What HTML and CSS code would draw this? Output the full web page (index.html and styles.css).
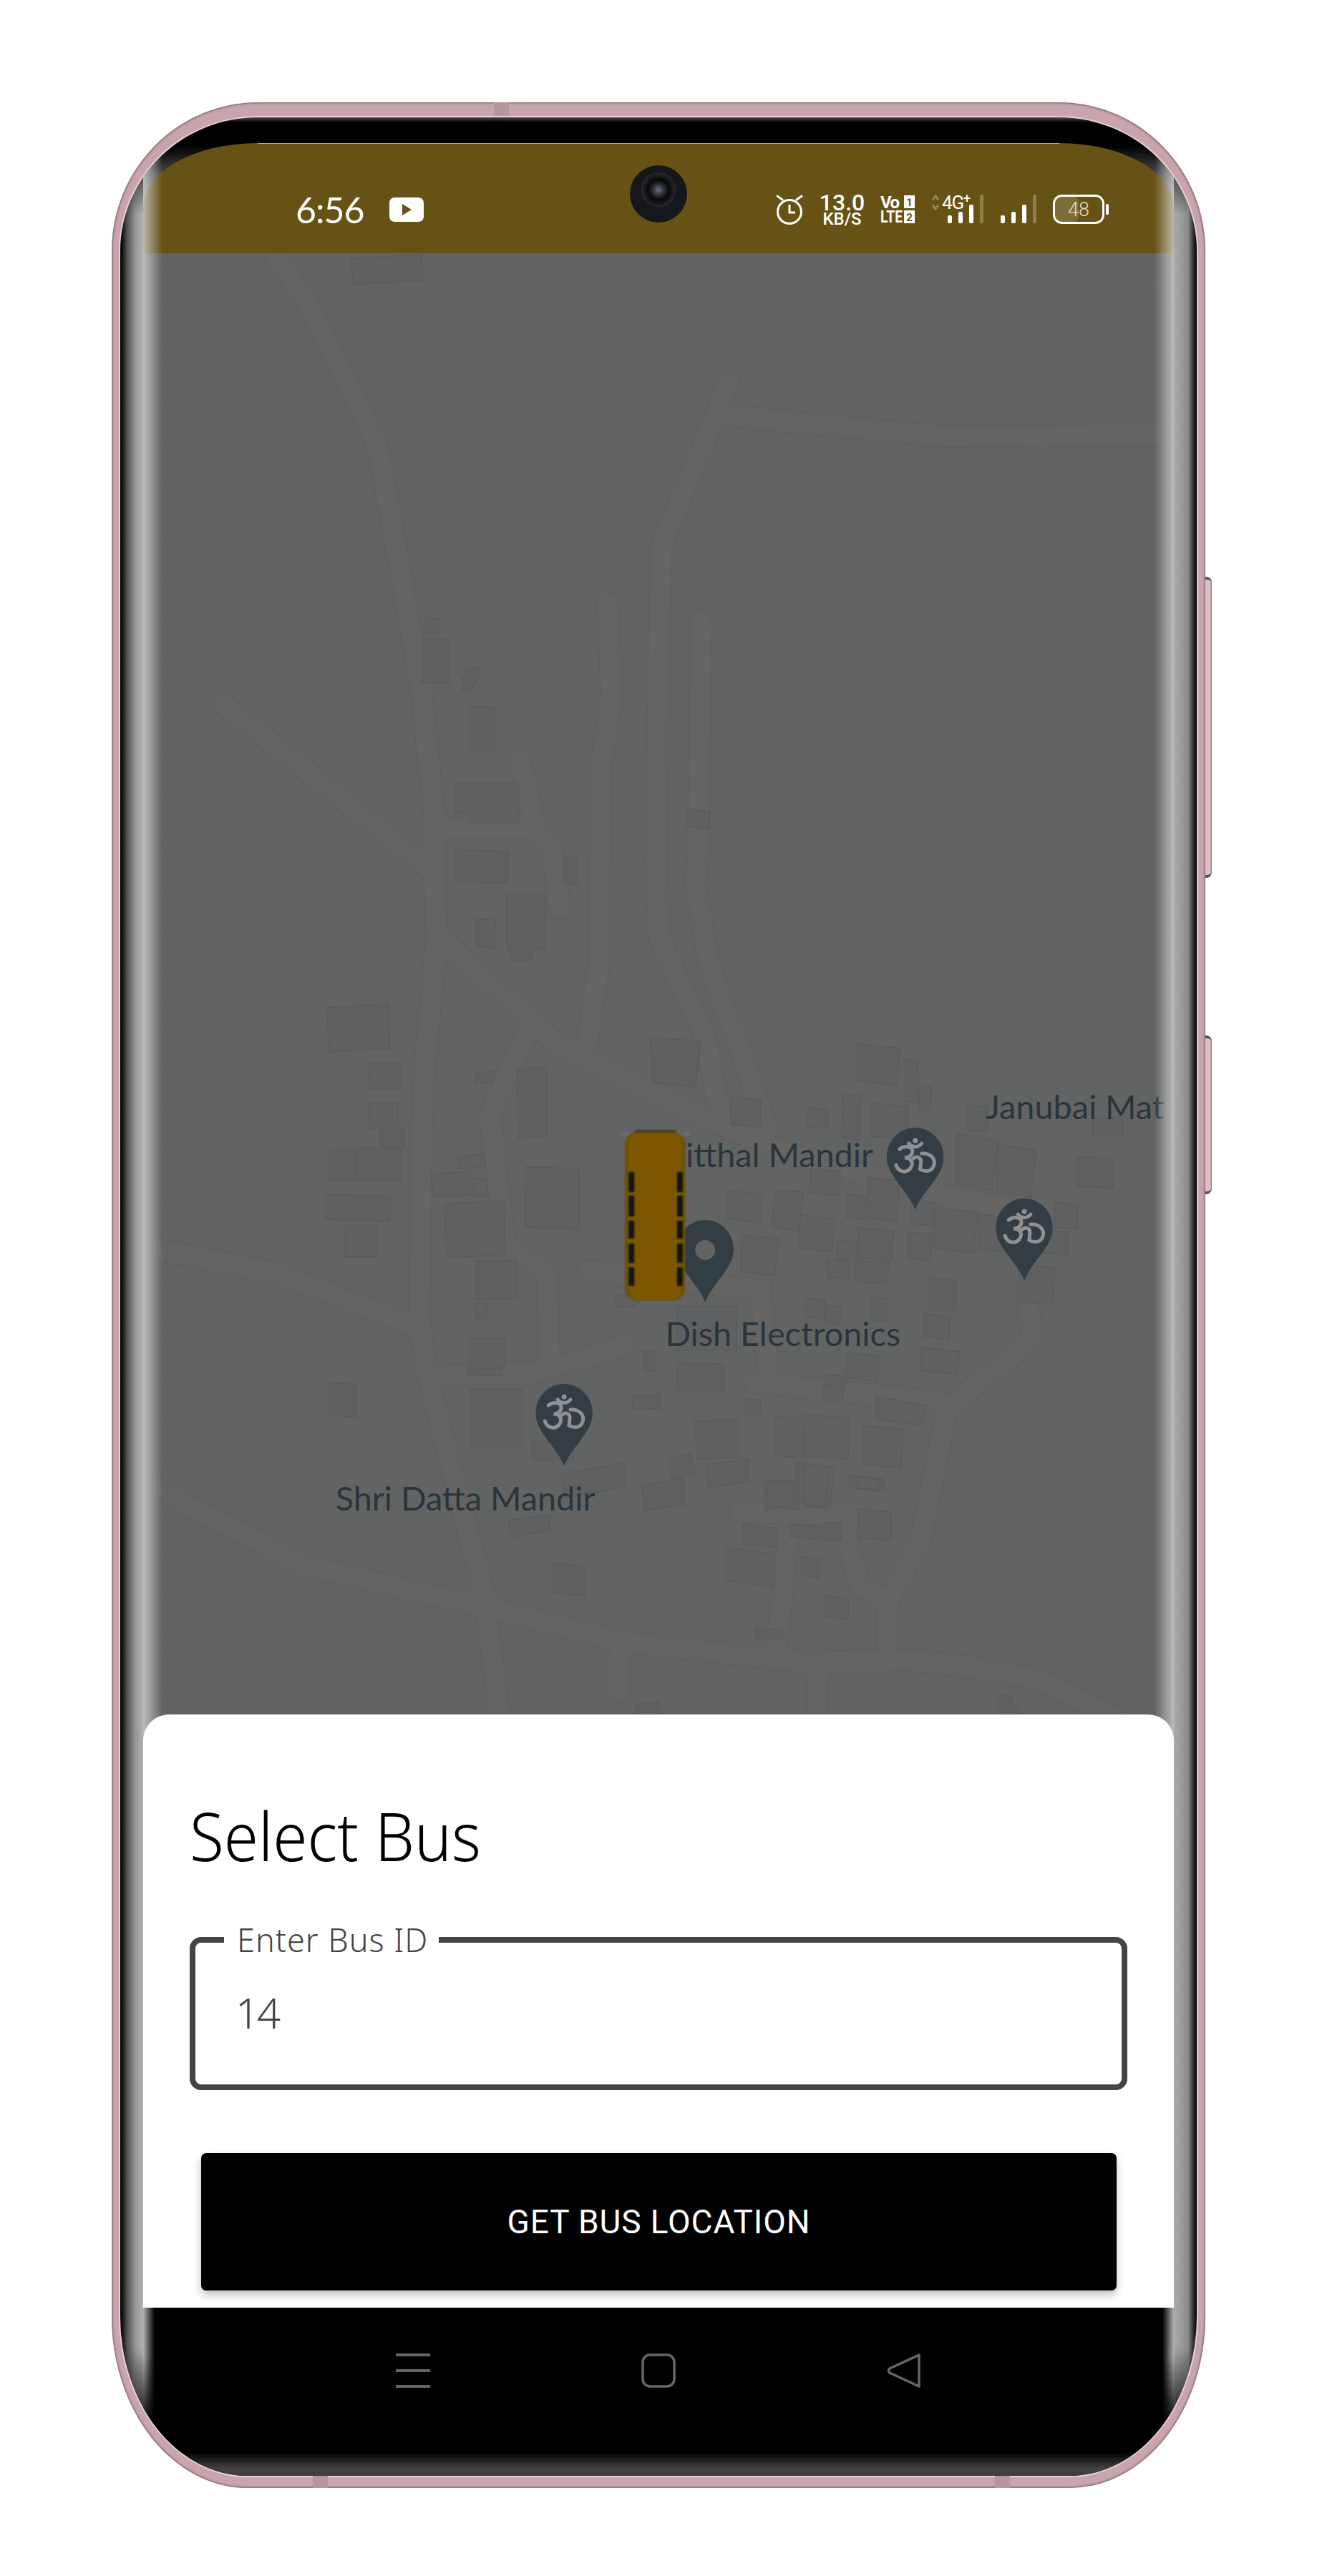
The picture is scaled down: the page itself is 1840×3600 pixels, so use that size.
FILE: index.html
```html
<!DOCTYPE html>
<html lang="en">
<head>
    <meta charset="UTF-8">
    <title>Select Bus</title>
    <link rel="stylesheet" href="styles.css">
</head>
<body>
    <div class="phone">
        <span class="tick tick-top"></span>
        <span class="tick tick-bottom-left"></span>
        <span class="tick tick-bottom-right"></span>
        <span class="side-btn side-btn-power"></span>
        <span class="side-btn side-btn-volume"></span>

        <div class="bezel">
            <div class="screen">
                <div class="upper">
                    <!-- status bar -->
                    <div class="status">
                        <span class="camera"></span>
                        <span class="time">6:56</span>
                        <svg class="yt" width="48" height="34" viewBox="0 0 48 34">
                            <path fill="#fff" fill-rule="evenodd" d="M8 0h32c5 0 8 3 8 8v18c0 5-3 8-8 8H8c-5 0-8-3-8-8V8c0-5 3-8 8-8zM18 9v16l13-8z"/>
                        </svg>
                        <div class="status-right">
                            <svg width="40" height="42" viewBox="0 0 40 42" fill="none" stroke="#fff" stroke-width="3">
                                <circle cx="20" cy="24" r="16.500"/>
                                <path d="M20 14v11h8"/>
                                <path d="M3 2l7 5M37 2l-7 5" stroke-linecap="round"/>
                            </svg>
                            <div class="speed">
                                <span class="speed-value">13.0</span>
                                <span class="speed-unit">KB/S</span>
                            </div>
                            <svg class="tall-icon" width="48" height="62" viewBox="0 -10 48 62">
                                <text class="volte-text" x="0" y="19" textLength="27" lengthAdjust="spacing">Vo</text>
                                <text class="volte-text" x="0" y="39" textLength="31" lengthAdjust="spacingAndGlyphs">LTE</text>
                                <rect x="33" y="1" width="15" height="18" fill="#fff"/>
                                <rect x="33" y="22" width="15" height="18" fill="#fff"/>
                                <text class="sim-num" x="40.500" y="16">1</text>
                                <text class="sim-num" x="40.500" y="37">2</text>
                            </svg>
                            <svg class="tall-icon" width="74" height="62" viewBox="0 -10 74 62">
                                <path d="M2 7l4-5 4 5M2 15l4 5 4-5" fill="none" stroke="#948657" stroke-width="3"/>
                                <text class="net-type" x="15" y="20">4G</text>
                                <text class="net-plus" x="45" y="11">+</text>
                                <g fill="#fff">
                                    <rect x="23" y="29" width="6" height="11" rx="2"/>
                                    <rect x="38" y="24" width="6" height="16" rx="2"/>
                                    <rect x="53" y="14" width="6" height="26" rx="2"/>
                                </g>
                                <rect x="68" y="0" width="5" height="40" rx="2" fill="#8d7e4a"/>
                            </svg>
                            <svg width="50" height="42" viewBox="0 0 50 42">
                                <g fill="#fff">
                                    <rect x="0" y="29" width="6" height="11" rx="2"/>
                                    <rect x="15" y="24" width="6" height="16" rx="2"/>
                                    <rect x="30" y="14" width="6" height="26" rx="2"/>
                                </g>
                                <rect x="45" y="0" width="5" height="40" rx="2" fill="#8d7e4a"/>
                            </svg>
                            <svg width="78" height="42" viewBox="0 0 78 42">
                                <rect x="3" y="3" width="33" height="35" rx="7" fill="#7c6c38"/>
                                <rect x="1.500" y="1.500" width="69" height="38" rx="11" fill="none" stroke="#fff" stroke-width="3"/>
                                <rect x="74" y="13" width="4" height="15" rx="1.500" fill="#fff"/>
                                <text class="battery-level" x="36" y="30">48</text>
                            </svg>
                        </div>
                    </div>

                    <!-- map -->
                    <div class="map">
                        <svg class="map-svg" width="1440" height="2078" viewBox="200 354 1447 2078" preserveAspectRatio="none">
                            <defs>
                                <path id="roads" d="M385 354L429 420 530 625 590 960 610 1150 610 1235 612 1312 595 1495 590 1600 588 1850 600 1925 680 2233 705 2440
                                    M315 986L610 1221
                                    M616 1309L781 1459 988 1562 1100 1610 1317 1670 1425 1690 1433 1690 1447 1874 1329 1968 1292 2150 1245 2240 1245 2307
                                    M1023 533L927 765 920 1200 925 1312 990 1452 1010 1560
                                    M1030 582L1325 610 1660 607
                                    M852 842L858 972 843 1067 840 1347 822 1467
                                    M983 867L980 1190 975 1235 993 1340 1040 1474 1075 1575
                                    M730 1063L750 1158 775 1189 785 1270
                                    M610 1158L750 1158
                                    M745 1430L687 1557 708 1740 767 1780 770 1900
                                    M600 1922L750 1919 875 1880
                                    M218 1746L390 1780 570 1849
                                    M180 2060L423 2187 665 2243 878 2295 1129 2323 1275 2320 1362 2330 1458 2347 1604 2420
                                    M1178 2117L1207 2217 1245 2240
                                    M1105 2150L1090 2300
                                    M1037 2113L1207 2117
                                    M1058 1932L1317 1959
                                    M868 2310L868 2365
                                    M1147 2330L1147 2440
                                    M825 1776L1067 1803 1079 1928"/>
                                <symbol id="om-pin" viewBox="0 0 80 115">
                                    <path class="pin" d="M40 0C62 0 80 18 80 41 80 68 50 88 40 115 30 88 0 68 0 41 0 18 18 0 40 0z"/>
                                    <g class="om">
                                        <path d="M18 30C25 24 37 26 36 34 35 40 29 42 25 42 35 42 38 50 33 57 27 64 16 62 13 52"/>
                                        <path d="M36 44C42 38 48 42 48 47L47 58"/>
                                        <path d="M49 36C62 35 69 44 66 53 63 62 53 62 47 58"/>
                                        <path d="M31 22C35 28 44 28 49 22"/>
                                        <circle class="om-dot" cx="40" cy="18" r="3.500"/>
                                    </g>
                                </symbol>
                            </defs>
                            <rect class="map-ground" x="200" y="354" width="1447" height="2078"/>
                            <use href="#roads" class="road-edge"/>
                            <use href="#roads" class="road-fill"/>
                            <path class="buildings" d="M492 361l99-5 1 36-97 6z
                                M595 863l21 2-1 21-21-2z M592 893h38v61h-38z M655 933l17 0v13l-12 19h-12v-13z M658 988h35v61h-35z
                                M638 1095h89v56h-69v-15h-20z M638 1187l75 3-2 44-73-2z M790 1198h20v38h-18z M710 1250h55v76h-55z M668 1284l27 2-2 39-25-2z M714 1326h33v16h-31z
                                M963 1130l32 4-1 24-31-3z M458 1408l87-5 1 62-85 5z
                                M517 1486h45v35h-45z M517 1541h41v36h-41z M533 1577h34v25h-34z M462 1607h36v42h-36z M500 1604h62v45h-62z M642 1616l37-3 2 18-37 2z M665 1500l27-3 1 15-27 2z
                                M725 1494l42-3v97l-40 3z M912 1450l71 5-8 64-60-6z M1025 1533l42 4-1 38-41-4z M1133 1548l29 3-1 26-28-2z M1202 1459l60 6-3 52-57-6z M1271 1481l16 1 2 59-18-2z M1287 1517l20 2-2 34-14-1z
                                M1182 1528l26 3-2 62-25-3z M1223 1541l52 6-3 46-49-5z M1358 1544l29 3-2 35-28-3z M1342 1584l58 10-8 70-50-9z M1400 1600l54 8-8 65-48-8z M1512 1617l50 2v41l-50-2z M1533 1562h42v24h-42z
                                M456 1669l92 3-2 35-90-3z M483 1713h46v43h-46z M604 1641l54-4 2 33-52 3z M662 1646l21 2v24h-20z M623 1682l84-4 1 75-82 5z M737 1631l75 2v85l-76-3z M668 1762h57v54h-57z M665 1822l18-2 1 23-17 0z M658 1870h49v40h-49z M654 1914l50-2v10h-50z
                                M1137 1633l42 4-2 34-41-4z M1021 1664l48 5-3 40-47-6z M1087 1663l40 3-7 54-37-5z M1187 1669l28 3-2 32-26-3z M1217 1646l45 4-4 57-41-4z M1040 1726l52 5-5 52-48-6z M1123 1698l48 5-4 46-47-5z M1175 1733l29 2-3 25-26-2z M1160 1760l32 2-2 25-30-2z M1204 1716l50 4-3 42-47-4z M1200 1762l48 3-4 29-44-3z
                                M1273 1722l34 3-1 37-33-3z M1277 1678l35 3-1 32-34-3z M1310 1689l61 5-5 57-56-6z M1373 1698l39 3-3 48-36-3z M1479 1680l33 3v35l-33-3z M1458 1718l42 4-2 32-40-4z M1429 1767l50 4-1 52-49-4z M1304 1785l38 4-2 45-36-4z M1221 1812l25 3-2 32-23-3z M1296 1836l37 4-2 32-35-4z M1129 1814l29 3-1 26-28-3z M1158 1823l21 3-1 26-20-3z
                                M950 1825h83v62h-83z M950 1905l65 1v37h-65z M1292 1883l54 6-3 32-51-6z M902 1888l16-1v29h-15z M862 1810l30-3v18l-28 2z M886 1952l41-3v19l-39 2z M1187 1890l46 5-2 35-44-4z M1157 1921l30 2-1 16-29-2z M1154 1937l29 2-1 18-28-2z M1229 1952l71 12-8 28-63-9z M1046 1954l21 3-1 22-20-2z
                                M462 1932l38 3-1 45-37-2z M660 1941h72v82h-72z M746 2015l58-2v26l-58 2z M786 2060l91-16v34l-85 15z M900 2076l60-10v37l-56 8z M937 2040l32-10 6 30-32 6z M990 2047l60-8v32l-58 8z M975 1986l60-2v53l-58 2z M1087 1979l42 3-3 55-39-3z M1129 1977l63 4-2 58-61-4z M1210 1992l57 6-3 54-54-6z M1117 2044l45 6-3 56-44-6z M1071 2072l41-4 2 35-41 8z M1192 2062l41 5-2 17-40-5z
                                M713 2125l58-8v22l-55 9z M776 2185l44 4v41l-44-4z M1018 2163l68 9v46l-68-9z M1042 2130l48 6v27l-48-6z M1108 2130l45 4v18l-45-4z M1156 2128h24v24h-24z M1204 2109l46 4v40l-46-4z M1076 2068l44 6v36l-44-6z M1127 2045l44 6-7 57-37-3z M1202 2062l38 5v16l-38-4z M1124 2175l25 4v26l-25-4z M1156 2230l34 4v29l-34-4z M1060 2275l38 3v13l-38-2z M892 2382l32-4v18h-32z M1400 2370h20v14h9v12h-29z"/>

                            <text class="place" x="1225" y="1631" text-anchor="end">Vitthal Mandir</text>
                            <text class="place" x="1383" y="1564">Janubai Mat</text>
                            <text class="place" x="933" y="1881">Dish Electronics</text>
                            <text class="place" x="470" y="2111">Shri Datta Mandir</text>

                            <use href="#om-pin" x="1244" y="1576" width="80" height="115"/>
                            <use href="#om-pin" x="1397" y="1675" width="80" height="115"/>
                            <use href="#om-pin" x="751" y="1934" width="80" height="115"/>

                            <path class="pin" fill-rule="evenodd" d="M989 1705C1011 1705 1029 1723 1029 1746 1029 1773 999 1793 989 1820 979 1793 949 1773 949 1746 949 1723 967 1705 989 1705zM989 1733a14 14 0 1 0 .01 0z"/>

                            <g class="bus">
                                <path class="bus-mirrors" d="M870 1585h98"/>
                                <rect class="bus-nose" x="891" y="1579" width="57" height="5"/>
                                <rect class="bus-shade" x="876" y="1582" width="85" height="236" rx="18"/>
                                <rect class="bus-body" x="882" y="1584" width="73" height="232" rx="14"/>
                                <path class="bus-windows" d="M885.500 1638v28M885.500 1671v29M885.500 1706v25M885.500 1738v27M885.500 1771v26M953.500 1638v28M953.500 1671v29M953.500 1706v25M953.500 1738v27M953.500 1771v26"/>
                            </g>
                        </svg>
                    </div>
                </div>

                <!-- bottom sheet -->
                <div class="sheet">
                    <h1 class="sheet-title">Select Bus</h1>
                    <fieldset class="field">
                        <legend>Enter Bus ID</legend>
                        <input type="text" value="14">
                    </fieldset>
                    <button class="get-btn" type="button">GET BUS LOCATION</button>
                </div>

                <!-- android nav -->
                <div class="navbar">
                    <svg width="48" height="48" viewBox="0 0 48 48" fill="#666">
                        <rect y="0" width="48" height="4"/>
                        <rect y="22" width="48" height="4"/>
                        <rect y="44" width="48" height="4"/>
                    </svg>
                    <svg width="48" height="48" viewBox="0 0 48 48" fill="none" stroke="#666" stroke-width="3.500">
                        <rect x="2" y="2" width="44" height="44" rx="10"/>
                    </svg>
                    <svg width="48" height="48" viewBox="0 0 48 48" fill="none" stroke="#666" stroke-width="3.500" stroke-linejoin="round">
                        <path d="M45 2v44L4 27c-2-2-2-4 0-6z"/>
                    </svg>
                </div>
            </div>
        </div>
    </div>
</body>
</html>
```

FILE: styles.css
```css
html, body {
    margin: 0;
    padding: 0;
    background: #fff;
}

body {
    height: 3600px;
    padding: 143px 0 0 156px;
    box-sizing: border-box;
    font-family: "Noto Sans", sans-serif;
}

.phone {
    position: relative;
    width: 1528px;
    height: 3334px;
    padding: 21px 12px 17px;
    box-sizing: border-box;
    background: #c9a4ac;
    border-radius: 205px 205px 190px 190px / 208px 208px 240px 240px;
    box-shadow: inset 0 0 3px 1px #6f5f63;
}

.tick {
    position: absolute;
    width: 21px;
    background: #b8949c;
}

.tick-top {
    top: 0;
    left: 534px;
    height: 19px;
}

.tick-bottom-left {
    bottom: 0;
    left: 281px;
    height: 17px;
}

.tick-bottom-right {
    bottom: 0;
    left: 1234px;
    height: 17px;
}

.side-btn {
    position: absolute;
    left: 100%;
    width: 9px;
    background: linear-gradient(90deg, #dcc0c7 70%, #8a7c80);
    border-top: 4px solid #555;
    border-bottom: 4px solid #555;
    border-radius: 0 8px 8px 0;
    box-sizing: border-box;
}

.side-btn-power {
    top: 663px;
    height: 421px;
}

.side-btn-volume {
    top: 1304px;
    height: 222px;
}

.bezel {
    height: 100%;
    padding: 36px 32px 0;
    box-sizing: border-box;
    overflow: hidden;
    border-radius: 193px 193px 178px 178px / 187px 187px 223px 223px;
    background:
        linear-gradient(180deg, #4c4c4c 0, #000 7px, #000 40px, transparent 135px, transparent calc(100% - 180px), #000 calc(100% - 60px), #000 100%),
        linear-gradient(90deg, #000 0, #111 3px, #555 10px, #999 22px, #b2b2b2 32px, #ababab calc(100% - 32px), #8a8a8a calc(100% - 12px), #333 calc(100% - 5px), #000 100%);
    box-shadow: 0 0 0 2px #e4d2d6;
}

.screen {
    display: flex;
    flex-direction: column;
    width: 1440px;
}

.upper {
    position: relative;
}

.upper::before,
.upper::after {
    content: "";
    position: absolute;
    top: 0;
    bottom: 0;
    width: 27px;
    z-index: 3;
}

.upper::before {
    left: 0;
    background: linear-gradient(90deg, rgba(210, 210, 210, .8), rgba(210, 210, 210, 0));
}

.upper::after {
    right: 0;
    background: linear-gradient(270deg, rgba(210, 210, 210, .8), rgba(210, 210, 210, 0));
}

/* status bar */
.status {
    position: relative;
    display: flex;
    align-items: center;
    height: 154px;
    padding: 32px 91px 0 213px;
    box-sizing: border-box;
    background: #665215;
    border-radius: 160px 160px 0 0 / 90px 90px 0 0;
    color: #fff;
}

.status::before {
    content: "";
    position: absolute;
    top: 0;
    left: 160px;
    right: 160px;
    height: 1px;
    background: #a9a9a9;
}

.camera {
    position: absolute;
    left: 680px;
    top: 31px;
    width: 80px;
    height: 80px;
    border-radius: 50%;
    background: radial-gradient(circle at 50% 43%, #667182 0, #2c2f37 8px, #08080a 14px, #26272b 24px, #16171a 25px);
}

.time {
    width: 93px;
    font-family: Lato, sans-serif;
    font-size: 50px;
    font-weight: 400;
    line-height: 1;
    letter-spacing: -1px;
}

.yt {
    margin-left: 38px;
}

.status-right {
    display: flex;
    align-items: center;
    gap: 23px;
    margin-left: auto;
}

.tall-icon {
    margin: -10px 0;
}

.speed {
    display: flex;
    flex-direction: column;
    align-items: center;
    width: 61px;
    font-family: Roboto, sans-serif;
    font-weight: 500;
}

.speed-value {
    font-size: 32px;
    line-height: 26px;
}

.speed-unit {
    font-size: 24px;
    line-height: 20px;
}

.volte-text {
    font: 700 24px Roboto, sans-serif;
    fill: #fff;
}

.sim-num {
    font: 700 15px Roboto, sans-serif;
    fill: #665215;
    text-anchor: middle;
}

.net-type {
    font: 400 26px Roboto, sans-serif;
    letter-spacing: -1px;
    fill: #fff;
}

.net-plus {
    font: 500 18px Roboto, sans-serif;
    fill: #fff;
}

.battery-level {
    font: 300 27px Roboto, sans-serif;
    fill: #e4dcc4;
    text-anchor: middle;
}

/* map */
.map {
    height: 2078px;
    overflow: hidden;
}

.map-svg {
    display: block;
}

.map-ground {
    fill: #626463;
}

.road-edge,
.road-fill {
    fill: none;
    stroke-linecap: round;
    stroke-linejoin: miter;
}

.road-edge {
    stroke: #5e5f5f;
    stroke-width: 32px;
}

.road-fill {
    stroke: #656463;
    stroke-width: 29px;
}

.buildings {
    fill: #5f6062;
    stroke: #5a5b5d;
    stroke-width: 1.500px;
}

.bus {
    filter: blur(1px);
}

.bus-mirrors {
    stroke: #6b6c6c;
    stroke-width: 5px;
}

.bus-nose {
    fill: #3b3c30;
}

.bus-shade {
    fill: #6f5104;
}

.bus-body {
    fill: #7c5700;
}

.bus-windows {
    stroke: #15140e;
    stroke-width: 8px;
}

.pin {
    fill: #323d44;
}

.om {
    fill: none;
    stroke: #8f9090;
    stroke-width: 5px;
    stroke-linecap: round;
}

.om-dot {
    fill: #8f9090;
    stroke: none;
}

.place {
    font: 400 47px Lato, sans-serif;
    fill: #2a343c;
}

/* bottom sheet */
.sheet {
    position: relative;
    z-index: 4;
    height: 829px;
    margin-top: -36px;
    padding: 104px 65px 0;
    box-sizing: border-box;
    background: #fff;
    border-radius: 36px 36px 0 0;
}

.sheet-title {
    margin: 0 0 58px;
    font-size: 94px;
    font-weight: 300;
    line-height: 130px;
    color: #000;
    transform: scaleX(.93);
    transform-origin: left;
}

.field {
    height: 233px;
    margin: 0;
    padding: 0 56px;
    box-sizing: border-box;
    border: 8px solid #444;
    border-radius: 16px;
}

.field legend {
    margin-left: -16px;
    padding: 0 15px 0 18px;
    font-size: 45px;
    font-weight: 300;
    line-height: 45px;
    letter-spacing: 1px;
    color: #444;
}

.field input {
    display: block;
    width: 100%;
    margin-top: 40px;
    padding: 0;
    border: 0;
    outline: 0;
    font-family: "Noto Sans", sans-serif;
    font-size: 58px;
    font-weight: 300;
    line-height: 80px;
    letter-spacing: -3px;
    color: #444;
}

.get-btn {
    display: block;
    width: 1279px;
    height: 192px;
    margin: 88px 0 0 16px;
    border: 0;
    border-radius: 7px;
    background: #000;
    color: #fff;
    font-family: Roboto, sans-serif;
    font-size: 46px;
    letter-spacing: .9px;
    box-shadow: 0 6px 12px rgba(0, 0, 0, .25);
}

/* android nav */
.navbar {
    position: relative;
    display: flex;
    justify-content: center;
    gap: 295px;
    height: 235px;
    padding-top: 64px;
    box-sizing: border-box;
    background: linear-gradient(180deg, #000 202px, #3f3f3f 224px);
}

.navbar::before,
.navbar::after {
    content: "";
    position: absolute;
    top: 0;
    height: 170px;
    width: 16px;
    -webkit-mask-image: linear-gradient(180deg, #000 40%, transparent);
    mask-image: linear-gradient(180deg, #000 40%, transparent);
}

.navbar::before {
    left: 0;
    background: linear-gradient(90deg, #b0b0b0, #000);
}

.navbar::after {
    right: 0;
    background: linear-gradient(270deg, #b0b0b0, #000);
}
```
